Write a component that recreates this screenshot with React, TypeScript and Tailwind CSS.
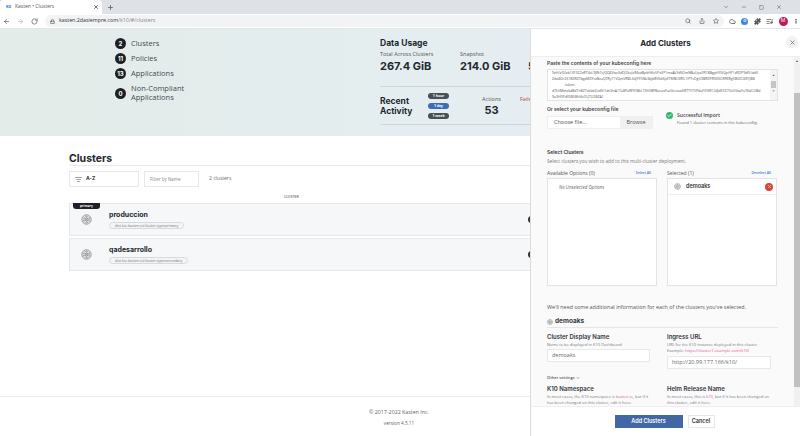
import { ArrowLeft, ArrowRight, Check, ChevronDown, Cloud, Ellipsis, ListFilter, ListMusic, Lock, Minus, Plus, Puzzle, RotateCw, Search, Share, Square, Star, X } from 'lucide-react'

const body = 'font-["Open_Sans",sans-serif]'
const head = 'font-["Inter",sans-serif]'

function ClusterIcon({ size = 14 }: { size?: number }) {
  return (
    <svg width={size} height={size} viewBox="0 0 20 20" fill="none" stroke="#666" strokeWidth="1.2">
      <circle cx="10" cy="10" r="8.5" />
      <circle cx="10" cy="10" r="5.8" strokeDasharray="2 1" />
      <circle cx="10" cy="10" r="3" />
      <path d="M3 6.5l14 7M3 13.5l14-7M10 2v16" strokeWidth="0.5" />
    </svg>
  )
}

function Count({ n, children }: { n: number; children: React.ReactNode }) {
  return (
    <div className="flex items-center gap-[5px]">
      <div className={`flex h-[11px] w-[11px] shrink-0 items-center justify-center rounded-full bg-[#1d2126] text-[6px] font-bold text-white ${head}`}>
        {n}
      </div>
      <div className="text-[7.5px] leading-[9px] text-[#444b52]">{children}</div>
    </div>
  )
}

function Pill({ label, active }: { label: string; active?: boolean }) {
  return (
    <div className={`flex h-[6px] w-[21px] items-center justify-center rounded-full text-[3.5px] font-bold text-white ${active ? 'bg-[#3d6db5]' : 'bg-[#4a4f55]'}`}>
      {label}
    </div>
  )
}

function ClusterRow({ name, label, primary }: { name: string; label: string; primary?: boolean }) {
  return (
    <div className="relative flex h-[33px] w-[466px] items-center border-y border-l border-[#e6e8ea] bg-[#f6f7f8]">
      {primary && (
        <div className={`absolute -top-px left-[3px] w-[27px] rounded-b-[3px] bg-[#1d2126] text-center text-[3.5px] font-semibold leading-[6px] text-white ${head}`}>
          primary
        </div>
      )}
      <div className="ml-[11px] w-[28px] shrink-0">
        <ClusterIcon size={11} />
      </div>
      <div>
        <div className={`text-[7px] font-bold leading-[9px] text-[#23282e] ${head}`}>{name}</div>
        <div className="mt-[3px] rounded-full border border-[#d8dadc] bg-[#f3f4f5] px-[5px] text-[3.6px] leading-[5px] text-[#777]">{label}</div>
      </div>
      <div className="ml-auto h-[7px] w-[7px] rounded-full bg-[#30353a]" />
    </div>
  )
}

function FieldLabel({ title, children }: { title: string; children: React.ReactNode }) {
  return (
    <div>
      <div className={`text-[6px] font-semibold leading-[8px] text-[#33383e] ${head}`}>{title}</div>
      <div className="mt-[1px] text-[4px] leading-[6px] text-[#777]">{children}</div>
    </div>
  )
}

export default function App() {
  return (
    <div className={`relative h-[436px] w-[800px] overflow-hidden bg-white ${body}`}>
      {/* browser chrome */}
      <div className="flex h-[14px] items-end bg-[#dee1e6]">
        <div className="flex h-[14px] w-[102px] items-center rounded-t-[4px] bg-white pl-[6px] pr-[3px]">
          <span className="mr-[4px] text-[4px] font-bold text-[#2a6fd0]">K0</span>
          <span className="flex-1 text-[5px] text-[#555]">Kasten • Clusters</span>
          <X size={6} strokeWidth={3} className="text-[#444]" />
        </div>
        <div className="ml-[5px] flex h-[14px] items-center">
          <Plus size={7} strokeWidth={2.5} className="text-[#555]" />
        </div>
        <div className="ml-auto flex h-[14px] items-center gap-[12px] pr-[18px] text-[#555]">
          <ChevronDown size={6} />
          <Minus size={6} />
          <Square size={5} />
          <X size={6} />
        </div>
      </div>
      <div className="flex h-[15px] items-center border-b border-[#e3e5e8] bg-white pl-[3px] pr-[1px]">
        <ArrowLeft size={7} strokeWidth={2.5} className="text-[#666]" />
        <ArrowRight size={7} strokeWidth={2.5} className="ml-[7px] text-[#bbb]" />
        <RotateCw size={7} strokeWidth={2.5} className="ml-[7px] text-[#666]" />
        <div className="ml-[7px] flex h-[12px] w-[679px] items-center rounded-full bg-[#f1f3f4] pl-[5px] pr-[5px]">
          <Lock size={5} strokeWidth={3} className="text-[#555]" />
          <span className="ml-[4px] text-[5.3px] text-[#333]">
            kasten.2dasiempre.com<span className="text-[#888]">/k10/#/clusters</span>
          </span>
          <div className="ml-auto flex items-center gap-[8px] text-[#555]">
            <Search size={6} strokeWidth={2.5} />
            <Share size={6} strokeWidth={2.5} />
            <Star size={6} strokeWidth={2.5} />
          </div>
        </div>
        <div className="ml-[5px] flex flex-1 items-center justify-between text-[#555]">
          <Cloud size={7} strokeWidth={2.5} />
          <div className="flex h-[7px] w-[7px] items-center justify-center rounded-full bg-[#3c84e0] text-[4px] font-bold text-white">O</div>
          <Puzzle size={7} fill="#555" />
          <ListMusic size={7} strokeWidth={2.5} />
          <div className="flex h-[9px] w-[9px] items-center justify-center rounded-full bg-[#c2185b] text-[5px] text-white">M</div>
          <Ellipsis size={6} strokeWidth={3} className="rotate-90" />
        </div>
      </div>

      {/* hero */}
      <div className="flex h-[107px] bg-gradient-to-r from-[#e3ece8] to-[#e6eef7] pl-[115px]">
        <div className="flex w-[265px] flex-col gap-[4px] pt-[9px]">
          <div className="flex h-[11px] items-center"><Count n={2}>Clusters</Count></div>
          <div className="flex h-[11px] items-center"><Count n={11}>Policies</Count></div>
          <div className="flex h-[11px] items-center"><Count n={13}>Applications</Count></div>
          <div className="mt-[1px]">
            <Count n={0}>Non-Compliant<br />Applications</Count>
          </div>
        </div>
        <div className="w-[150px] shrink-0 overflow-hidden">
          <div className="h-[58px] border-b border-[#cfd6da] pt-[9px]">
            <div className={`text-[8.5px] font-bold leading-[10px] text-[#23282e] ${head}`}>Data Usage</div>
            <div className="mt-[2px] flex">
              <div className="w-[80px] shrink-0">
                <div className="text-[5.5px] leading-[8px] text-[#555]">Total Across Clusters</div>
                <div className={`mt-[1px] text-[11px] font-bold leading-[14px] text-[#23282e] ${head}`}>267.4 GiB</div>
              </div>
              <div className="w-[68px] shrink-0">
                <div className="text-[5.5px] leading-[8px] text-[#555]">Snapshot</div>
                <div className={`mt-[1px] text-[11px] font-bold leading-[14px] text-[#23282e] ${head}`}>214.0 GiB</div>
              </div>
              <div className={`mt-[9px] text-[11px] font-bold leading-[14px] text-[#23282e] ${head}`}>5</div>
            </div>
          </div>
          <div className="flex h-[38px] items-center border-b border-[#cfd6da]">
            <div className={`w-[48px] shrink-0 text-[8.5px] font-bold leading-[10px] text-[#23282e] ${head}`}>Recent<br />Activity</div>
            <div className="flex w-[44px] shrink-0 flex-col gap-[4px]">
              <Pill label="1 hour" />
              <Pill label="1 day" active />
              <Pill label="1 week" />
            </div>
            <div className="w-[39px] shrink-0 text-center">
              <div className="text-[5.5px] leading-[8px] text-[#555]">Actions</div>
              <div className={`text-[11px] font-bold leading-[14px] text-[#23282e] ${head}`}>53</div>
            </div>
            <div className="mb-[14px] ml-[9px] whitespace-nowrap text-[5.5px] leading-[8px] text-[#b4484f]">Failed</div>
          </div>
        </div>
      </div>

      {/* clusters list */}
      <div className="pl-[69px]">
        <div className={`mt-[17px] border-b border-[#e8e9ea] text-[10.5px] font-bold leading-[12px] text-[#23282e] ${head}`}>Clusters</div>
        <div className="mt-[5px] flex items-center">
          <div className="flex h-[16px] w-[70px] items-center border border-[#e6e8ea] pl-[5px]">
            <ListFilter size={7} className="text-[#555]" />
            <span className={`ml-[4px] text-[5px] font-bold text-[#333] ${head}`}>A-Z</span>
          </div>
          <div className="ml-[5px] flex h-[16px] w-[55px] items-center border border-[#e6e8ea] pl-[5px] text-[4.5px] text-[#888]">Filter by Name</div>
          <div className="ml-[10px] text-[5px] text-[#666]">2 clusters</div>
        </div>
        <div className="mt-[7px] pl-[215px] text-[3.5px] font-semibold leading-[6px] text-[#666]">CLUSTER</div>
        <div className="mt-[3px] flex flex-col gap-[2px]">
          <ClusterRow name="produccion" label="dist.kio.kasten.io/cluster-type:primary" primary />
          <ClusterRow name="qadesarrollo" label="dist.kio.kasten.io/cluster-type:secondary" />
        </div>
      </div>

      {/* footer */}
      <div className="absolute inset-x-0 top-[396px] border-t border-[#ececec] pl-[268px] pr-[270px] pt-[11px] text-center text-[#666]">
        <div className="text-[5.3px] leading-[8px]">© 2017-2022 Kasten Inc.</div>
        <div className="mt-[3px] text-[4.7px] leading-[8px]">version 4.5.11</div>
      </div>

      {/* add clusters panel */}
      <div className="absolute bottom-0 left-[530px] right-0 top-[29px] flex flex-col border-l border-[#dcdcdc] bg-white">
        <div className="relative flex h-[28px] shrink-0 items-center justify-center border-b border-[#eeeeee]">
          <span className={`text-[8px] font-bold text-[#23282e] ${head}`}>Add Clusters</span>
          <div className="absolute right-[2px] top-[7px] flex h-[12px] w-[12px] items-center justify-center rounded-full bg-[#f0f1f2]">
            <X size={7} className="text-[#555]" />
          </div>
        </div>
        <div className="relative flex-1 overflow-hidden bg-[#fafafa] pl-[16px] pr-[23px]">
          <div className="absolute bottom-0 right-0 top-0 w-[6px] bg-[#f1f1f1]">
            <div className="absolute inset-x-0 top-[1px] text-center text-[3px] leading-[6px] text-[#333]">▲</div>
            <div className="absolute inset-x-0 top-[36px] h-[294px] bg-[#c1c1c1]" />
          </div>
          <div className={`pt-[3px] text-[5px] font-semibold leading-[7px] text-[#444] ${head}`}>Paste the contents of your kubeconfig here</div>
          <div className="relative mt-[2px] h-[32px] w-[231px] overflow-hidden border border-[#e3e3e3] bg-white pl-[4px] pr-[10px] text-[3.5px] leading-[6px] text-[#555]">
            <div className="whitespace-nowrap">9eH/z0Uzb1XF3Z2eRT4sL9JRt7cJQQ6Ywz3dDJ2kuJsR4sdBpbHKv5PxVP1mzAkYdSOmNBaUpz2R1BBgpHYGQpHP1zRDP9dFUddK</div>
            <div className="whitespace-nowrap">Zde4Or2X1B3RZTbgzM3YvzBvuQTRyT1VQmVR8L3dJYF5Nk3bjbRVSdXpXTMBC3RfL1IPTvDgU3BRDFRXXXCRRXRg5BVZC6R1JBB</div>
            <div className="pl-[13px]">token:</div>
            <div className="whitespace-nowrap">dTk5MmxkdBdTnBZTxkbbZvdGI1dnVnA1Tu8PaWYDBkLT3h5BPBacusFvaGorxuz6RTT5T5PduFDGR12dJdX5Z7Uc5GzuFuT6dCUBd</div>
            <div className="whitespace-nowrap">9a9H0PdY6B5BH4sDLJTU2BZA1</div>
            <div className="absolute bottom-0 right-0 top-0 flex w-[7px] flex-col items-center bg-[#f4f4f4]">
              <div className="mt-[3px] text-[3px] leading-[4px] text-[#555]">▲</div>
              <div className="mt-[4px] h-[7px] w-[5px] bg-[#c4c4c4]" />
              <div className="mt-[1px] text-[3px] leading-[4px] text-[#888]">▼</div>
            </div>
          </div>
          <div className={`mt-[5px] text-[5px] font-semibold leading-[7px] text-[#444] ${head}`}>Or select your kubeconfig file</div>
          <div className="mt-[3px] flex h-[13px] items-start">
            <div className="flex h-[13px] w-[106px] items-center border border-[#eeeeee] bg-white">
              <div className="flex-1 pl-[6px] text-[5.5px] text-[#555]">Choose file...</div>
              <div className="flex h-full w-[32px] items-center justify-center bg-[#f0f0f0] text-[5.5px] text-[#555]">Browse</div>
            </div>
            <div className="ml-[13px] mt-[-4px] flex h-[7px] w-[7px] shrink-0 items-center justify-center rounded-full bg-[#2eb872]">
              <Check size={5} strokeWidth={4} className="text-white" />
            </div>
            <div className="ml-[4px] mt-[-4px]">
              <div className="text-[5px] font-semibold leading-[7px] text-[#444]">Successful Import</div>
              <div className="mt-[1px] text-[4px] leading-[6px] text-[#666]">Found 1 cluster contexts in this kubeconfig.</div>
            </div>
          </div>
          <div className={`mt-[20px] text-[5px] font-semibold leading-[7px] text-[#33383e] ${head}`}>Select Clusters</div>
          <div className="mt-[2px] text-[4.7px] leading-[7px] text-[#777]">Select clusters you wish to add to this multi-cluster deployment.</div>
          <div className="mt-[5px] flex gap-[10px]">
            <div className="w-[110px]">
              <div className="flex items-end justify-between pr-[6px] text-[5px] leading-[6px] text-[#555]">
                Available Options (0)
                <span className="text-[3.5px] font-semibold text-[#3d74c5]">Select All</span>
              </div>
              <div className="mt-[2px] h-[108px] border border-[#e3e3e3] bg-white pl-[11px] pt-[5px] text-[4.5px] italic leading-[7px] text-[#666]">No Unselected Options</div>
            </div>
            <div className="w-[110px]">
              <div className="flex items-end justify-between pr-[6px] text-[5px] leading-[6px] text-[#555]">
                Selected (1)
                <span className="text-[3.5px] font-semibold text-[#3d74c5]">Deselect All</span>
              </div>
              <div className="mt-[2px] h-[108px] border border-[#e3e3e3] bg-white">
                <div className="flex h-[16px] items-center border-b border-[#eeeeee] pl-[6px] pr-[3px]">
                  <ClusterIcon size={7} />
                  <span className={`ml-[5px] text-[5.5px] font-semibold text-[#333] ${head}`}>demoaks</span>
                  <div className="ml-auto flex h-[8px] w-[8px] items-center justify-center rounded-full bg-[#d2493b]">
                    <X size={5} strokeWidth={3} className="text-white/70" />
                  </div>
                </div>
              </div>
            </div>
          </div>
          <div className="mt-[17px] text-[5.4px] leading-[8px] text-[#555]">We'll need some additional information for each of the clusters you've selected.</div>
          <div className="mt-[8px] flex h-[9px] w-[231px] items-center gap-[2px] border-b border-[#e6e6e6] pb-[2px]">
            <ClusterIcon size={6} />
            <span className={`text-[6.5px] font-bold text-[#33383e] ${head}`}>demoaks</span>
          </div>
          <div className="mt-[5px] flex gap-[17px]">
            <div className="w-[103px]">
              <FieldLabel title="Cluster Display Name">Name to be displayed in K10 Dashboard</FieldLabel>
              <div className="mt-[1px] flex h-[13px] items-center border border-[#e8e8e8] bg-white pl-[4px] text-[5.5px] text-[#666]">demoaks</div>
            </div>
            <div className="w-[104px]">
              <FieldLabel title="Ingress URL">
                URL for the K10 instance deployed in this cluster
                <br />
                Example: <span className="text-[#e0559c]">https://cluster1.example.com/k10/</span>
              </FieldLabel>
              <div className="mt-[2px] flex h-[13px] items-center border border-[#e8e8e8] bg-white pl-[4px] text-[5.5px] text-[#666]">http://20.99.177.166/k10/</div>
            </div>
          </div>
          <div className="mt-[6px] flex items-center gap-[1px] text-[4px] font-semibold leading-[6px] text-[#555]">
            Other settings <ChevronDown size={4} strokeWidth={3} />
          </div>
          <div className="mt-[4px] flex gap-[17px]">
            <div className="w-[103px]">
              <FieldLabel title="K10 Namespace">
                In most cases, the K10 namespace is <span className="text-[#e0559c]">kasten-io</span>, but if it has been changed on this cluster, edit it here.
              </FieldLabel>
            </div>
            <div className="w-[104px]">
              <FieldLabel title="Helm Release Name">
                In most cases, this is <span className="text-[#e0559c]">k10</span>, but if it has been changed on this cluster, edit it here.
              </FieldLabel>
            </div>
          </div>
        </div>
        <div className="flex h-[30px] shrink-0 items-center justify-center gap-[5px] border-t border-[#eeeeee] bg-white pr-[2px]">
          <div className={`flex h-[13px] w-[68px] items-center justify-center bg-[#4267a5] text-[5.5px] font-semibold text-white ${head}`}>Add Clusters</div>
          <div className={`flex h-[13px] w-[27px] items-center justify-center border border-[#e6e6e6] text-[5.5px] font-semibold text-[#333] ${head}`}>Cancel</div>
        </div>
      </div>
    </div>
  )
}
